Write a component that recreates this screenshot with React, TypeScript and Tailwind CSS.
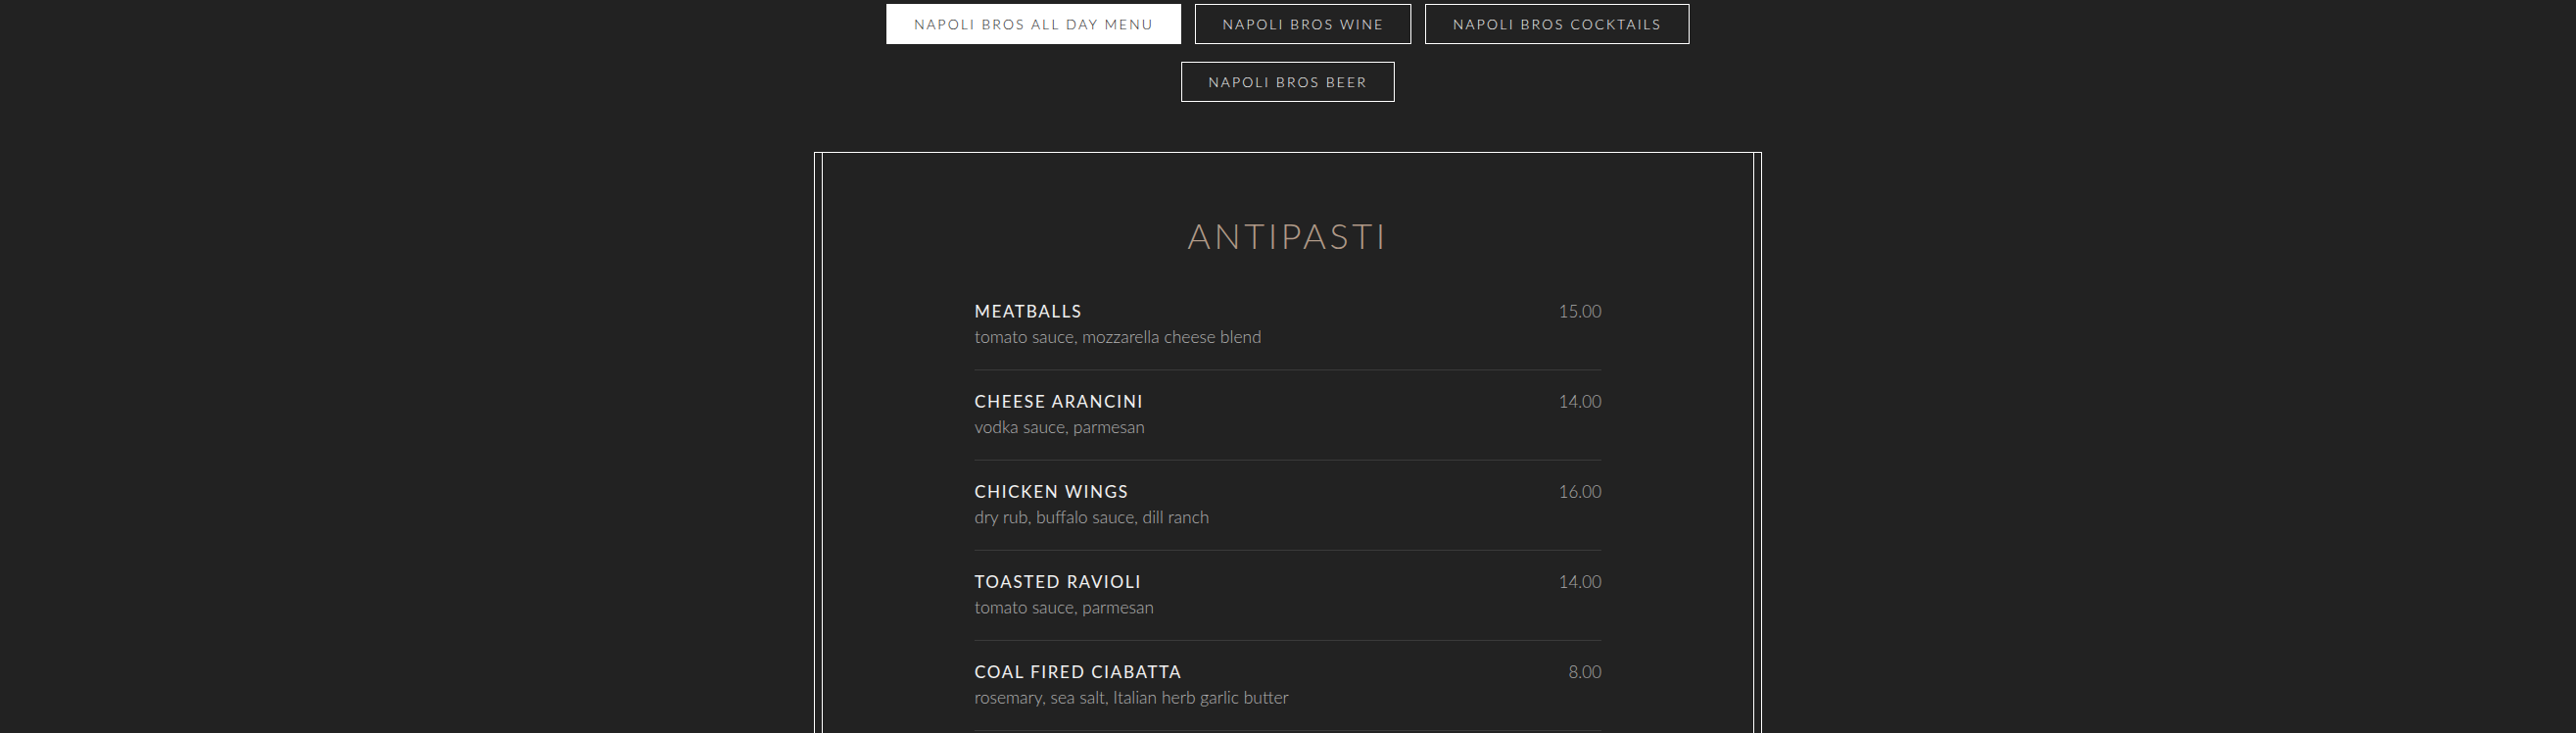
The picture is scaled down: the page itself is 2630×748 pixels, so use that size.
import React from 'react';

type Item = { name: string; desc: string; price: string };

const antipasti: Item[] = [
    { name: 'Meatballs', desc: 'tomato sauce, mozzarella cheese blend', price: '15.00' },
    { name: 'Cheese Arancini', desc: 'vodka sauce, parmesan', price: '14.00' },
    { name: 'Chicken Wings', desc: 'dry rub, buffalo sauce, dill ranch', price: '16.00' },
    { name: 'Toasted Ravioli', desc: 'tomato sauce, parmesan', price: '14.00' },
    { name: 'Coal Fired Ciabatta', desc: 'rosemary, sea salt, Italian herb garlic butter', price: '8.00' },
];

const MenuTab: React.FC<{ label: string; active?: boolean }> = ({ label, active }) => (
    <button
        className={`h-[41px] px-[27px] border border-white text-[14px] font-light tracking-[0.16em] uppercase leading-none ${active ? 'bg-white text-[#222]' : 'bg-transparent text-white'}`}
    >
        {label}
    </button>
);

const MenuRow: React.FC<{ item: Item }> = ({ item }) => (
    <div className="pt-[19px] pb-[20px] border-b border-[#3a3a3a]">
        <div className="flex justify-between items-start">
            <span className="text-[17px] leading-[26px] uppercase text-[#f2f2f2] tracking-[0.1em]">{item.name}</span>
            <span className="text-[17px] leading-[26px] font-light text-[#ababab]">{item.price}</span>
        </div>
        <p className="text-[17.5px] leading-[26px] font-light text-[#b3b3b3]">{item.desc}</p>
    </div>
);

export default function App() {
    return (
        <div className="min-h-screen bg-[#222222] font-['Lato','Liberation_Sans',sans-serif] overflow-hidden">
            {/* Tabs */}
            <div className="flex flex-col items-center gap-[18px] pt-[4px]">
                <div className="flex gap-[14px]">
                    <MenuTab label="Napoli Bros All Day Menu" active />
                    <MenuTab label="Napoli Bros Wine" />
                    <MenuTab label="Napoli Bros Cocktails" />
                </div>
                <MenuTab label="Napoli Bros Beer" />
            </div>

            {/* Menu card */}
            <div className="relative w-[968px] mx-auto mt-[51px]">
                <div className="absolute top-0 left-0 w-[960px] h-full border border-white pointer-events-none" />
                <div className="ml-[8px] mt-[8px] w-[960px] border border-white pl-[155px] pt-[64px] pb-[200px]">
                    <div className="w-[640px]">
                        <h2 className="text-center text-[36px] leading-[40px] font-light tracking-[0.1em] text-[#b09a88] uppercase mb-[26px]">
                            Antipasti
                        </h2>
                        {antipasti.map(item => <MenuRow key={item.name} item={item} />)}
                    </div>
                </div>
            </div>
        </div>
    );
}
